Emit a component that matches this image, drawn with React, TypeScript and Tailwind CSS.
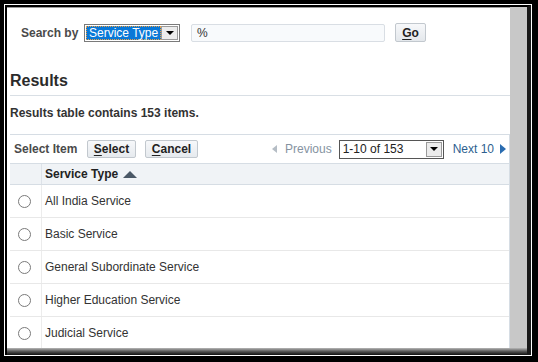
import React from "react";

const font = { fontFamily: '"Liberation Sans", Arial, sans-serif' };

function Radio() {
  return <span className="block w-[13px] h-[13px] rounded-full border border-[#7a7a7a] bg-white" />;
}

function Btn({ first, rest, w }: { first: string; rest: string; w: string }) {
  return (
    <span
      className={`flex items-center justify-center h-[18px] ${w} border border-[#c2c8ce] rounded-[2px] bg-gradient-to-b from-[#f7f8fa] to-[#e6eaee] text-[12px] font-bold text-[#222]`}
    >
      <span className="underline underline-offset-2">{first}</span>
      {rest}
    </span>
  );
}

const rows = [
  "All India Service",
  "Basic Service",
  "General Subordinate Service",
  "Higher Education Service",
  "Judicial Service",
];

export default function App() {
  return (
    <div className="w-[538px] h-[362px] bg-black pt-[4px] pl-[4px] pr-[6px] pb-[6px]" style={font}>
      <div className="w-full h-full border border-white">
        <div className="w-full h-full flex flex-col border-t-2 border-l-2 border-r-[4px] border-t-black border-l-black border-r-[#1a1a1a]">
          <div className="flex flex-1 min-h-0">
            <div className="flex-1 bg-white pl-[3px] flex flex-col overflow-hidden border-t border-[#9a9a9a]">
              {/* search row */}
              <div className="shrink-0 mt-[15px] h-[19px] flex items-center pl-[11px]">
                <span className="text-[12px] font-bold text-[#4a4a4a] w-[63px]">Search by</span>
                <div className="flex h-[18px] w-[96px] border border-[#7a7a7a] bg-white p-[1px]">
                  <div className="flex-1 bg-[#0a78d7] border border-dotted border-[#f0a040] flex items-center pl-[2px] text-[12px] text-white leading-none">
                    Service Type
                  </div>
                  <div className="w-[17px] bg-[#ececec] border border-[#9a9a9a] flex items-center justify-center">
                    <span className="w-0 h-0 border-l-[4px] border-r-[4px] border-t-[4px] border-l-transparent border-r-transparent border-t-black" />
                  </div>
                </div>
                <div className="ml-[11px] h-[18px] w-[194px] border border-[#d9dee4] rounded-[2px] bg-[#f8fafc] flex items-center pl-[5px] text-[12px] text-[#333]">
                  %
                </div>
                <span className="ml-[10px] flex items-center justify-center h-[19px] w-[31px] border border-[#c2c8ce] rounded-[2px] bg-gradient-to-b from-[#f7f8fa] to-[#e4e8ec] text-[12px] font-bold text-[#222]">
                  <span className="underline underline-offset-2">G</span>o
                </span>
              </div>

              {/* results heading */}
              <div className="shrink-0 mt-[29px] h-[25px] border-b border-[#d9dfe5]">
                <div className="text-[16px] font-bold leading-[20px] text-[#2b2b2b]">Results</div>
              </div>
              <div className="shrink-0 mt-[9px] text-[12px] font-bold leading-[16px] text-[#333]">
                Results table contains 153 items.
              </div>

              {/* table */}
              <div className="shrink-0 mt-[13px] border-t border-r border-[#d6dde4]">
                <div className="h-[29px] flex items-center border-b border-[#d6dde4] pl-[4px]">
                  <span className="text-[12px] font-bold text-[#4a4a4a] w-[73px]">Select Item</span>
                  <Btn first="S" rest="elect" w="w-[49px]" />
                  <span className="w-[9px]" />
                  <Btn first="C" rest="ancel" w="w-[53px]" />
                  <span className="ml-[74px] w-0 h-0 border-t-[4px] border-b-[4px] border-r-[5px] border-t-transparent border-b-transparent border-r-[#b5bdc5]" />
                  <span className="ml-[8px] text-[12px] text-[#8593a1]">Previous</span>
                  <div className="ml-[7px] flex h-[19px] w-[105px] border border-[#555] bg-white">
                    <div className="flex-1 flex items-center pl-[3px] text-[12px] text-[#222]">1-10 of 153</div>
                    <div className="w-[16px] m-[1px] bg-[#ececec] border border-[#9a9a9a] flex items-center justify-center">
                      <span className="w-0 h-0 border-l-[4px] border-r-[4px] border-t-[4px] border-l-transparent border-r-transparent border-t-black" />
                    </div>
                  </div>
                  <span className="ml-[9px] text-[12px] text-[#2d5f8f]">Next 10</span>
                  <span className="ml-[6px] w-0 h-0 border-t-[5px] border-b-[5px] border-l-[6px] border-t-transparent border-b-transparent border-l-[#2a6cb0]" />
                </div>
                <div className="h-[21px] flex bg-[#f0f3f6] border-b border-[#d6dde4]">
                  <div className="w-[32px] border-r border-[#dde2e8]" />
                  <div className="flex items-center pl-[3px] text-[12px] font-bold text-[#222]">
                    Service Type
                    <span className="ml-[5px] w-0 h-0 border-l-[7px] border-r-[7px] border-b-[7px] border-l-transparent border-r-transparent border-b-[#4a5866]" />
                  </div>
                </div>
                {rows.map((r) => (
                  <div key={r} className="h-[33px] flex border-b border-[#e8e8e8]">
                    <div className="w-[32px] border-r border-[#ececec] flex items-center pl-[8px]">
                      <Radio />
                    </div>
                    <div className="flex items-center pl-[3px] text-[12px] text-[#333]">{r}</div>
                  </div>
                ))}
                <div className="h-[20px] flex">
                  <div className="w-[32px] border-r border-[#ececec]" />
                </div>
              </div>
            </div>
            <div className="w-[17px] bg-[#c8c8c8]" />
          </div>
          <div className="h-[7px] shrink-0 bg-gradient-to-b from-[#b8b8b8] via-[#555] to-[#111]" />
        </div>
      </div>
    </div>
  );
}
